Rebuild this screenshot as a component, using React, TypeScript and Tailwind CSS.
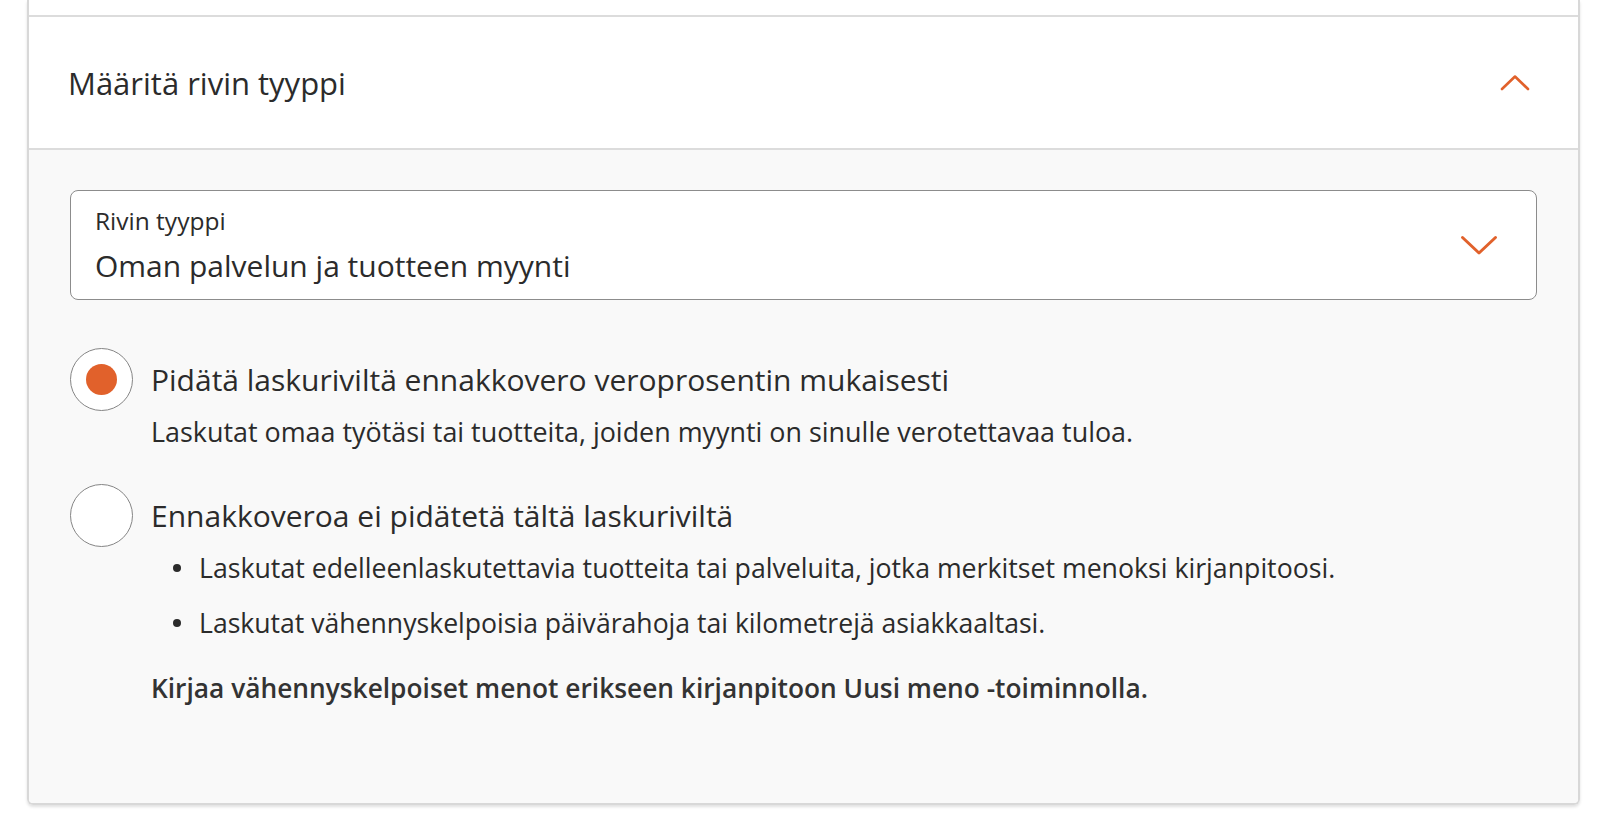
import React from "react";

function ChevronUp() {
  return (
    <svg width="30" height="17" viewBox="0 0 30 17" fill="none">
      <path d="M2 15 L15 2.5 L28 15" stroke="#e1612b" strokeWidth="2.6" strokeLinecap="round" strokeLinejoin="round" />
    </svg>
  );
}

function ChevronDown() {
  return (
    <svg width="38" height="21" viewBox="0 0 38 21" fill="none">
      <path d="M2.5 2.5 L19 18 L35.5 2.5" stroke="#e1612b" strokeWidth="3" strokeLinecap="round" strokeLinejoin="round" />
    </svg>
  );
}

function Radio({ checked }: { checked: boolean }) {
  return (
    <div className="w-[63px] h-[63px] shrink-0 rounded-full border-[1.5px] border-[#858585] bg-white flex items-center justify-center">
      {checked && <div className="w-[31px] h-[31px] rounded-full bg-[#e1612b]" />}
    </div>
  );
}

export default function App() {
  return (
    <div
      className="w-[1600px] h-[828px] bg-white overflow-hidden text-[#2b2b2b]"
      style={{ fontFamily: '"Open Sans", "Noto Sans", sans-serif' }}
    >
      <div className="ml-[27px] w-[1553px] border-x-2 border-b-2 border-[#d8d8d8] rounded-b-[6px] shadow-[0_2px_3px_rgba(0,0,0,0.12)] overflow-hidden">
        <div className="h-[17px] bg-white border-b-2 border-[#dcdcdc]" />
        <div className="h-[133px] bg-white border-b-2 border-[#dcdcdc] flex items-center justify-between pl-[39px] pr-[48px]">
          <span className="text-[31px] leading-[40px]">Määritä rivin tyyppi</span>
          <ChevronUp />
        </div>
        <div className="bg-[#f9f9f9] pt-[40px] pb-[97px] px-[41px]">
          <div className="h-[110px] bg-white border-[1.5px] border-[#8c8c8c] rounded-[8px] flex items-center justify-between pl-[24px] pr-[38px]">
            <div className="flex flex-col self-start pt-[16px]">
              <span className="text-[24.5px] leading-[28px]">Rivin tyyppi</span>
              <span className="text-[30px] leading-[38px] mt-[12px]">Oman palvelun ja tuotteen myynti</span>
            </div>
            <ChevronDown />
          </div>

          <div className="mt-[48px]">
            <div className="flex items-center gap-[18px]">
              <Radio checked={true} />
              <span className="text-[30px] leading-[40px]">Pidätä laskuriviltä ennakkovero veroprosentin mukaisesti</span>
            </div>
            <p className="ml-[81px] mt-[3px] text-[26.9px] leading-[36px]">
              Laskutat omaa työtäsi tai tuotteita, joiden myynti on sinulle verotettavaa tuloa.
            </p>

            <div className="flex items-center gap-[18px] mt-[34px]">
              <Radio checked={false} />
              <span className="text-[30px] leading-[40px]">Ennakkoveroa ei pidätetä tältä laskuriviltä</span>
            </div>
            <ul className="ml-[81px] mt-[3px] flex flex-col gap-[19px]">
              <li className="flex items-center text-[26.7px] leading-[36px]">
                <span className="w-[8px] h-[8px] rounded-full bg-[#2b2b2b] ml-[22px] mr-[18px] shrink-0" />
                Laskutat edelleenlaskutettavia tuotteita tai palveluita, jotka merkitset menoksi kirjanpitoosi.
              </li>
              <li className="flex items-center text-[26.6px] leading-[36px]">
                <span className="w-[8px] h-[8px] rounded-full bg-[#2b2b2b] ml-[22px] mr-[18px] shrink-0" />
                Laskutat vähennyskelpoisia päivärahoja tai kilometrejä asiakkaaltasi.
              </li>
            </ul>
            <p className="ml-[81px] mt-[29px] text-[26.3px] leading-[36px] font-semibold text-[#333333]">
              Kirjaa vähennyskelpoiset menot erikseen kirjanpitoon Uusi meno -toiminnolla.
            </p>
          </div>
        </div>
      </div>
    </div>
  );
}
